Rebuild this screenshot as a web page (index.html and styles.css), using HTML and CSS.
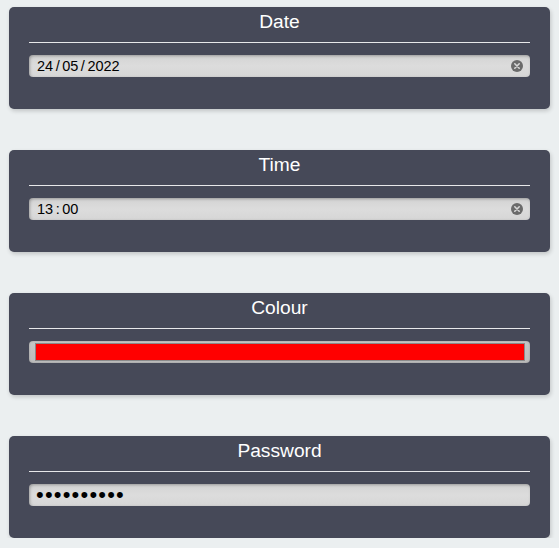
FILE: index.html
```html
<!DOCTYPE html>
<html>
<head>
<meta charset="utf-8">
<link rel="stylesheet" href="styles.css">
</head>
<body>
<main class="stack">
  <section class="card">
    <h2 class="card-title">Date</h2>
    <div class="field">
      <span class="field-value">24 / 05 / 2022</span>
      <svg class="clear" width="12" height="12" viewBox="0 0 12 12"><circle cx="6" cy="6" r="6" fill="#6b6b6b"/><path d="M3.8 3.8 L8.2 8.2 M8.2 3.8 L3.8 8.2" stroke="#d8d8d8" stroke-width="1.6" stroke-linecap="round"/></svg>
    </div>
  </section>
  <section class="card">
    <h2 class="card-title">Time</h2>
    <div class="field">
      <span class="field-value">13 : 00</span>
      <svg class="clear" width="12" height="12" viewBox="0 0 12 12"><circle cx="6" cy="6" r="6" fill="#6b6b6b"/><path d="M3.8 3.8 L8.2 8.2 M8.2 3.8 L3.8 8.2" stroke="#d8d8d8" stroke-width="1.6" stroke-linecap="round"/></svg>
    </div>
  </section>
  <section class="card">
    <h2 class="card-title">Colour</h2>
    <div class="field field-colour">
      <div class="swatch"></div>
    </div>
  </section>
  <section class="card">
    <h2 class="card-title">Password</h2>
    <div class="field">
      <span class="field-value dots">••••••••••</span>
    </div>
  </section>
</main>
</body>
</html>
```

FILE: styles.css
```css
html, body {
  margin: 0;
  padding: 0;
}
body {
  background: #ebeff0;
  font-family: Arial, "Liberation Sans", sans-serif;
}
.stack {
  display: flex;
  flex-direction: column;
  gap: 41px;
  padding: 7px 9px 0 9px;
}
.card {
  width: 541px;
  height: 102px;
  box-sizing: border-box;
  background: #464958;
  border-radius: 5px;
  box-shadow: 1px 2px 4px rgba(0, 0, 0, 0.18);
  padding: 3px 20px 0 20px;
}
.card-title {
  margin: 0 0 12px 0;
  font-size: 19.2px;
  font-weight: normal;
  line-height: 24px;
  color: #ffffff;
  text-align: center;
  padding-bottom: 8px;
  border-bottom: 1px solid #e8e8ea;
}
.field {
  height: 22px;
  box-sizing: border-box;
  border-radius: 4px;
  background: linear-gradient(#d3d3d3, #dcdcdc 50%, #d6d6d6);
  box-shadow: inset 1px 1px 3px rgba(0, 0, 0, 0.28);
  display: flex;
  align-items: center;
  padding: 0 8px;
  justify-content: space-between;
}
.field-value {
  font-size: 14.5px;
  word-spacing: -1.5px;
  color: #000;
  line-height: 22px;
}
.clear {
  display: block;
  margin-right: -1px;
}
.dots {
  margin-left: -1px;
  font-size: 22px;
  letter-spacing: 1.2px;
  line-height: 22px;
}
.field-colour {
  padding: 2px 5px 2px 6px;
  background: linear-gradient(#c6c6c6, #bcbcbc);
  box-shadow: inset 0 0 2px rgba(0, 0, 0, 0.25);
}
.swatch {
  flex: 1;
  height: 18px;
  box-sizing: border-box;
  background: #ff0000;
  border: 1px solid #8a8a8a;
}
```
